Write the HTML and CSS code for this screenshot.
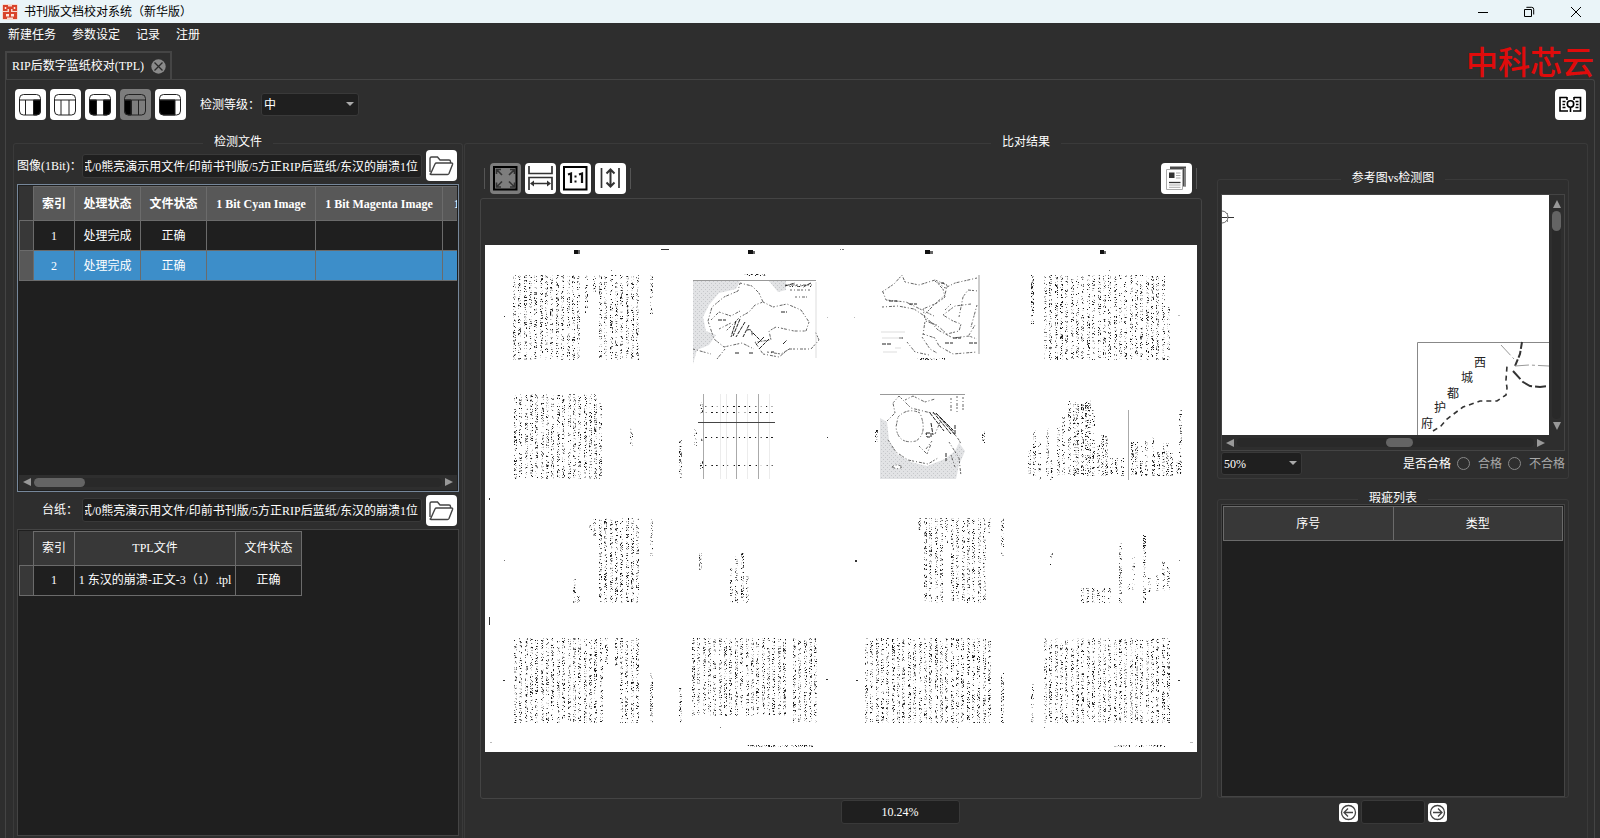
FILE: index.html
```html
<!DOCTYPE html>
<html lang="zh-CN">
<head>
<meta charset="utf-8">
<title>书刊版文档校对系统（新华版）</title>
<link rel="stylesheet" href="styles.css">
</head>
<body>
<header class="titlebar">
  <svg class="app-icon" viewBox="0 0 16 16" aria-hidden="true">
    <rect width="16" height="16" rx="2" fill="#f6d9cf"/>
    <path d="M1 1h5v1.500h4V1h5v6h-4.500V5H9v3h6v7h-4v-1.500H5V15H1V8h6V5H5.500v2H1z" fill="#d8432a"/>
    <path d="M3.500 3v2M12.500 3v2" stroke="#fbe9e0" stroke-width="1.500"/>
    <path d="M4 10h3v2.500H4zM9 10h3v2.500H9z" fill="#fbe9e0"/>
  </svg>
  <h1 class="app-title">书刊版文档校对系统（新华版）</h1>
  <div class="window-buttons">
    <button type="button" aria-label="最小化"><svg viewBox="0 0 12 12"><path d="M1 6.500h10"/></svg></button>
    <button type="button" aria-label="还原"><svg viewBox="0 0 12 12"><path d="M3.500 1.500V1.300h5.200a2 2 0 0 1 2 2v5.200M1.500 3.500h7v7h-7z"/></svg></button>
    <button type="button" aria-label="关闭"><svg viewBox="0 0 12 12"><path d="M1 1l10 10M11 1L1 11"/></svg></button>
  </div>
</header>

<nav class="menubar">
  <button type="button">新建任务</button>
  <button type="button">参数设定</button>
  <button type="button">记录</button>
  <button type="button">注册</button>
</nav>

<div class="tabstrip">
  <div class="tab">
    <span>RIP后数字蓝纸校对(TPL)</span>
    <button type="button" class="tab-close" aria-label="关闭标签"><svg viewBox="0 0 15 15"><circle cx="7.500" cy="7.500" r="7.200" fill="#8a8a8a"/><path d="M3.500 3.500l8 8M11.500 3.500l-8 8" stroke="#2b2b2b" stroke-width="1.300"/></svg></button>
  </div>
  <div class="brand">中科芯云</div>
</div>

<main class="pane">
  <div class="toolbar">
    <button type="button" class="tool" aria-label="右栏布局"><svg viewBox="0 0 31 31"><path d="M18.500 11h7v11a4 4 0 0 1-4 4h-3z" fill="#000"/><rect x="4.500" y="5.500" width="21" height="20.500" rx="4"/><path d="M4.500 11h21M10.500 11v15M18.500 11v15"/></svg></button>
    <button type="button" class="tool" aria-label="三栏布局"><svg viewBox="0 0 31 31"><rect x="4.500" y="5.500" width="21" height="20.500" rx="4"/><path d="M4.500 11h21M11 11v15M19 11v15"/></svg></button>
    <button type="button" class="tool" aria-label="两侧布局"><svg viewBox="0 0 31 31"><path d="M18.500 11h7v11a4 4 0 0 1-4 4h-3zM11.500 11h-7v11a4 4 0 0 0 4 4h3z" fill="#000"/><rect x="4.500" y="5.500" width="21" height="20.500" rx="4"/><path d="M4.500 11h21"/></svg></button>
    <button type="button" class="tool active" aria-label="左栏布局"><svg viewBox="0 0 31 31"><path d="M11 11H4.500v11a4 4 0 0 0 4 4H11z" fill="#000"/><rect x="4.500" y="5.500" width="21" height="20.500" rx="4"/><path d="M4.500 11h21M11.500 11v15M18.500 11v15"/></svg></button>
    <button type="button" class="tool" aria-label="宽左栏布局"><svg viewBox="0 0 31 31"><path d="M20 11H4.500v11a4 4 0 0 0 4 4H20z" fill="#000"/><rect x="4.500" y="5.500" width="21" height="20.500" rx="4"/><path d="M4.500 11h21"/></svg></button>
    <label class="level-label" for="level">检测等级：</label>
    <span class="combo combo-level"><select id="level"><option>中</option></select></span>
    <button type="button" class="tool push-right" aria-label="对照检查"><svg viewBox="0 0 31 31"><g stroke="#000" stroke-width="1.600"><path d="M12 8.500H5v13.500h8M19 8.500h6.500v13.500H18M12 8v3M19 8v3"/><circle cx="15.500" cy="15" r="3.200"/><path d="M15.500 18.500V23"/></g><path d="M7.500 12.500h3M7.500 15.500h2.500M7.500 18.500h3M20.500 12.500h3M21 15.500h2.500M20.500 18.500h3" stroke="#000" stroke-width="1.400"/></svg></button>
  </div>

  <div class="columns">
    <fieldset class="group group-open files">
      <legend>检测文件</legend>
      <div class="files-body">
        <div class="path-row">
          <label for="image-path">图像(1Bit)：</label>
          <input id="image-path" class="field path" type="text" value="试/0熊亮演示用文件/印前书刊版/5方正RIP后蓝纸/东汉的崩溃1位">
          <button type="button" class="tool" aria-label="打开图像文件夹"><svg viewBox="0 0 31 31"><path d="M4 22V8.500q0-1.500 1.500-1.500h6l2.500 3h9q1.500 0 1.500 1.500v1.500M4.500 24l4.500-10q.5-1 1.500-1h15q1.500 0 1 1.500l-3.500 9q-.5 1-1.500 1H5q-1 0-1-1" stroke="#444" stroke-width="1.400"/></svg></button>
        </div>
        <div class="table-box focused">
          <div class="table-clip">
            <table class="grid grid-images">
              <colgroup><col class="c-mark"><col class="c-index"><col class="c-state"><col class="c-state"><col class="c-cyan"><col class="c-magenta"><col class="c-yellow"></colgroup>
              <thead><tr><td class="corner"></td><th>索引</th><th>处理状态</th><th>文件状态</th><th>1 Bit Cyan Image</th><th>1 Bit Magenta Image</th><th>1 Bit Yellow Image</th></tr></thead>
              <tbody>
                <tr><td class="mark"></td><td>1</td><td>处理完成</td><td>正确</td><td></td><td></td><td></td></tr>
                <tr class="selected"><td class="mark"></td><td>2</td><td>处理完成</td><td>正确</td><td></td><td></td><td></td></tr>
              </tbody>
            </table>
          </div>
          <div class="scroll-h">
            <button type="button" class="arrow left" aria-label="向左滚动"></button>
            <div class="track"><div class="thumb thumb-table"></div></div>
            <button type="button" class="arrow right" aria-label="向右滚动"></button>
          </div>
        </div>
        <div class="path-row">
          <label for="tpl-path">台纸：</label>
          <input id="tpl-path" class="field path" type="text" value="试/0熊亮演示用文件/印前书刊版/5方正RIP后蓝纸/东汉的崩溃1位">
          <button type="button" class="tool" aria-label="打开台纸文件夹"><svg viewBox="0 0 31 31"><path d="M4 22V8.500q0-1.500 1.500-1.500h6l2.500 3h9q1.500 0 1.500 1.500v1.500M4.500 24l4.500-10q.5-1 1.500-1h15q1.500 0 1 1.500l-3.500 9q-.5 1-1.500 1H5q-1 0-1-1" stroke="#444" stroke-width="1.400"/></svg></button>
        </div>
        <div class="table-box">
          <div class="table-clip">
            <table class="grid grid-tpl">
              <colgroup><col class="c-mark"><col class="c-index"><col class="c-file"><col class="c-state"></colgroup>
              <thead><tr><td class="corner"></td><th>索引</th><th>TPL文件</th><th>文件状态</th></tr></thead>
              <tbody><tr><td class="mark"></td><td>1</td><td>1 东汉的崩溃-正文-3（1）.tpl</td><td>正确</td></tr></tbody>
            </table>
          </div>
        </div>
      </div>
    </fieldset>

    <fieldset class="group group-open result">
      <legend>比对结果</legend>
      <div class="result-body">
        <section class="viewer">
          <div class="view-tools">
            <i class="sep"></i>
            <button type="button" class="tool active" aria-label="适合窗口"><svg viewBox="0 0 31 31"><rect x="4" y="4" width="22.500" height="22.500" stroke="#000" stroke-width="2"/><path d="M12 12L6.500 6.500M6.500 11V6.500H11M19 12l5.500-5.500M20 6.500h4.500V11M12 18.500L6.500 24M6.500 19.500V24H11M19 18.500l5.500 5.500M20 24h4.500v-4.500" stroke="#333" stroke-width="1.600"/></svg></button>
            <button type="button" class="tool" aria-label="适合宽度"><svg viewBox="0 0 31 31"><path d="M4 3v7.500h23V3M4 27V14.500h23V27" stroke="#333" stroke-width="1.700"/><path d="M7 20.500h17" stroke="#333" stroke-width="1.500"/><path d="M5 20.500l4-3v6zM26 20.500l-4-3v6z" fill="#333" stroke="none"/></svg></button>
            <button type="button" class="tool" aria-label="实际大小"><svg viewBox="0 0 31 31"><rect x="4" y="4" width="22.500" height="22.500" stroke="#000" stroke-width="2"/><path d="M8 11.500l3-1V20M19 11.500l3-1V20" stroke="#111" stroke-width="2.200"/><path d="M14.500 12.500h2v2h-2zM14.500 17.500h2v2h-2z" fill="#111" stroke="none"/></svg></button>
            <button type="button" class="tool" aria-label="适合高度"><svg viewBox="0 0 31 31"><path d="M6.500 5v20M24 5v20" stroke="#333" stroke-width="1.700"/><path d="M15.500 8v14M11.500 10.500l4-4 4 4M11.500 19.500l4 4 4-4" stroke="#333" stroke-width="2"/></svg></button>
            <i class="sep"></i>
            <button type="button" class="tool push-right" aria-label="报告"><svg viewBox="0 0 31 31"><path d="M9 3.500h16v20H9z" fill="#4a4a4a" stroke="none"/><path d="M24 5v18" stroke="#999" stroke-width="1.500"/><path d="M5.500 6.500h16v20h-16z" fill="#fff" stroke="#aaa"/><path d="M8 9.500h5.500V15H8z" fill="#333" stroke="none"/><path d="M8 19.500h11.500" stroke="#333" stroke-width="1.300"/><path d="M15 10h4.500M15 12.500h4.500M15 15h4.500M8 22h11.500M8 24.300h11.500" stroke="#aaa" stroke-width="1"/></svg></button>
            <i class="sep"></i>
          </div>
          <div class="canvas">
            <svg class="sheet" viewBox="0 0 712 507" role="img" aria-label="拼版预览">
              <defs>
                <pattern id="tone" width="4" height="4" patternUnits="userSpaceOnUse"><rect width="4" height="4" fill="#e2e3e5"/><path d="M0 0h1v1H0zM2 2h1v1H2z" fill="#c6c8cb"/></pattern>
              </defs>
              <rect width="712" height="507" fill="#fff"/>
              <g shape-rendering="crispEdges">
                <path d="M89 5h4v4h-4zM263 5h5v4h-5zM440 5h5v4h-5zM615 5h4v4h-4z" fill="#111"/>
                <path d="M93 5h2v4h-2zM268 6h2v3h-2zM445 6h3v3h-3zM619 6h2v3h-2z" fill="#666"/>
                <path d="M176 4h8v1h-8zM4 372h1v8H4zM4 253h1v2H4zM19 71h1v1h-1zM342 192h1v1h-1zM341 434h2v1h-2zM18 435h2v1h-2zM370 315h2v2h-2zM371 435h2v1h-2zM693 435h2v1h-2z" fill="#333"/>
                <path d="M357 4h2v1h-2zM355 4h1v1h-1zM694 315h1v1h-1zM19 315h1v1h-1zM235 482h1v1h-1zM472 482h1v1h-1zM559 482h1v1h-1zM126 25h1v1h-1zM624 25h1v1h-1z" fill="#777"/>
                <path d="M5 497h2v1H5zM705 497h3v1h-3zM342 72h1v1h-1zM369 72h1v1h-1zM693 70h2v1h-2z" fill="#bbb"/>
              </g>
              <g fill="url(#tone)">
                <path d="M208 36h47l-4 8-17 4-10 12-6 12 3 14 10 4-7 10-12 5-4 14zM284 36h17v9l-8 2z"/>
                <path d="M395 173l7 4 2 18 8 14 14 8 16 4 18-7 10-8 4-8 6 8-6 14-3 14h-76z"/>
              </g>
              <g class="map">
                <path d="M208 35.500h123" class="edge"/>
                <path d="M331 37v76" class="faint"/>
                <path d="M255 38l12 3 7 7 4 9-8 3-6 7-9 5-8 8-6 6M255 38l-2 8-14 6-12 10-4 14 6 18 10 8 18-4 12 6M278 57l10 5 14-3 14 6 8 12-3 9-12 0-18-4-7 4 2 9-16 2 8 12 16 3 10-8 22 0 8-9-4-9"/>
                <path d="M251 76l-5 16M255 74l-7 17M260 77l-9 15M264 80l-6 12M262 85q6-2 5 6M268 88l8 8M279 92l-8 8M284 94l-10 10" class="dark"/>
                <path d="M226 75l8-8 12 4 9-5M234 84l12-6M240 104l-8 10M208 104l18 5M282 107l14 2 10-6M300 40h28M305 45h20M310 52h12"/>
                <path d="M300 41l10-3M318 42l8-4M296 67h6M233 75h8M250 108h4M264 108h5M286 107h3M298 99l4-4" class="dark"/>
                <path d="M494 30v79" class="edge"/>
                <path d="M397 47l12-8 8-9 3 7 14 3 16-5 12 5-2 10-10 9-10 10M398 47l3 8 20 2 14 7 14 7M450 36l8 8 2 8-8 6-14 6 2 10 14 8 8 7 12-3 2-7-8-3-10-6 12-9 16-2M492 33l-22 5-10 5-8-6M474 72l4-20 5-7 10 1M397 62l16-1 16 3 12 8 12 13 15 8 16-2 8 3M438 89l12 4 4 8 14 8 24-2M437 92l8 12 7 4M438 90l2-14 12 4M422 97l8 10 14 3M460 65l6-6M492 60l-6 22M484 90l6-10"/>
                <path d="M456 38h3M404 56h8M424 59h8M460 98h8M468 93h8M484 98h8M397 99h9M414 93h5" class="dark"/>
                <path d="M396 87h24M397 93h20M410 103h6M398 107h14" class="faint"/>
                <path d="M395 149.500h85" class="edge"/>
                <path d="M402 176l8-8-2-10 6-7 12 12 16 4 10 2 10 10 12 16 2 4M420 155l8-4 12 6 10-3M413 172q10-10 22-4 8 20-4 28-18 4-20-14zM403 195l8 12 12 8 20 4 10-6M434 201l8 8 4-10M447 196l-6 8M464 197l10 16 2 18M450 189l6-14M470 222l-4-12"/>
                <path d="M445 168l14 18M448 167l18 22M451 168l20 23M455 172l14 14M441 188h5v4h-4zM446 178l2 12M470 180v10M461 208v8" class="dark"/>
                <path d="M466 153v14M472 151v17M478 152v14"/>
                <path d="M407 222q5-4 10 0-4 3-10 0z" fill="#fff"/>
              </g>
              <g shape-rendering="crispEdges">
                <path d="M218.500 149v85M273.500 149v85M251.500 149v85" stroke="#aaa"/>
                <path d="M241.500 149v85M235.500 149v85M262.500 149v85M284.500 149v85" stroke="#ececec"/>
                <path d="M643.500 165v70" stroke="#aaa"/>
                <path d="M213 177.500h77" stroke="#444"/>
              </g>
              <g id="ink" shape-rendering="crispEdges"></g>
            </svg>
          </div>
          <div class="zoom-row"><input class="field zoom-value" type="text" value="10.24%" aria-label="缩放比例"></div>
        </section>

        <aside class="side">
          <fieldset class="group">
            <legend>参考图vs检测图</legend>
            <div class="compare-body">
              <div class="compare-view">
                <svg class="detail" viewBox="0 0 327 240" preserveAspectRatio="xMaxYMax slice" role="img" aria-label="参考图局部">
                  <rect width="327" height="240" fill="#fff"/>
                  <g fill="none" stroke="#333">
                    <path d="M0 16a6 6 0 0 1 0 12" stroke="#666"/>
                    <path d="M0 22.500h12"/><path d="M5.500 18v9" stroke="#888"/>
                    <path d="M195.500 240v-92.500H327" stroke="#888"/>
                    <path d="M211 236l8-5 6-7 16-12 17-6h17l9-6 1-7-1-8 1-14" stroke-width="1.600" stroke-dasharray="5 4"/>
                    <path d="M300 147l-2 12-5 12" stroke-width="2" stroke-dasharray="7 2"/>
                    <path d="M291 176l10 11 7 4 10 1 9-1" stroke-width="2" stroke-dasharray="11 3"/>
                    <path d="M279 150l13 14M293 171l14-1 20 1" stroke="#999" stroke-dasharray="14 3 3 3"/>
                  </g>
                  <g class="map-label"><text x="258" y="172">西</text><text x="245" y="187">城</text><text x="231" y="203">都</text><text x="218" y="217">护</text><text x="205" y="233">府</text></g>
                </svg>
                <div class="scroll-v">
                  <button type="button" class="arrow up" aria-label="向上滚动"></button>
                  <div class="track"><div class="thumb thumb-v"></div></div>
                  <button type="button" class="arrow down" aria-label="向下滚动"></button>
                </div>
                <div class="scroll-h">
                  <button type="button" class="arrow left" aria-label="向左滚动"></button>
                  <div class="track"><div class="thumb thumb-detail"></div></div>
                  <button type="button" class="arrow right" aria-label="向右滚动"></button>
                </div>
              </div>
              <div class="verdict">
                <span class="combo combo-zoom"><select aria-label="局部缩放"><option>50%</option></select></span>
                <span class="verdict-title">是否合格</span>
                <label class="choice"><input type="radio" name="verdict">合格</label>
                <label class="choice"><input type="radio" name="verdict">不合格</label>
              </div>
            </div>
          </fieldset>
          <fieldset class="group defects">
            <legend>瑕疵列表</legend>
            <div class="defect-body">
              <table class="grid grid-defects"><thead><tr><th>序号</th><th>类型</th></tr></thead></table>
            </div>
          </fieldset>
          <div class="pager">
            <button type="button" aria-label="上一个"><svg viewBox="0 0 19 19"><circle cx="9.500" cy="9.500" r="7"/><path d="M14 9.500H5.500M9 5.500l-4 4 4 4"/></svg></button>
            <input class="field" type="text" aria-label="瑕疵序号">
            <button type="button" aria-label="下一个"><svg viewBox="0 0 19 19"><circle cx="9.500" cy="9.500" r="7"/><path d="M5 9.500h8.500M10 5.500l4 4-4 4"/></svg></button>
          </div>
        </aside>
      </div>
    </fieldset>
  </div>
</main>
<script src="preview.js"></script>
</body>
</html>
```

FILE: styles.css
```css
* { box-sizing: border-box; }

body {
  margin: 0;
  height: 100vh;
  display: flex;
  flex-direction: column;
  overflow: hidden;
  background: #2e2e2e;
  color: #fff;
  font: 12px/16px "Liberation Serif", "Noto Sans CJK SC", serif;
}

button, input, select { font: inherit; color: inherit; }
button { padding: 0; border: 0; background: none; }
svg { display: block; }

.titlebar {
  display: flex;
  align-items: center;
  flex: none;
  height: 23px;
  padding-left: 2px;
  background: #eaf4f8;
  color: #000;
}
.app-icon { width: 16px; height: 16px; }
.app-title { margin: 0 0 0 6px; font-size: 12px; font-weight: 400; }
.window-buttons { display: flex; margin-left: auto; height: 20px; }
.window-buttons button { width: 46px; display: flex; align-items: center; justify-content: center; }
.window-buttons button:last-child { width: 48px; }
.window-buttons svg { width: 12px; height: 12px; fill: none; stroke: #000; }

.menubar { display: flex; flex: none; gap: 16px; height: 23px; padding-left: 8px; }

.tabstrip { display: flex; flex: none; height: 33px; padding: 0 6px 0 5px; justify-content: space-between; }
.tab {
  display: flex;
  align-items: center;
  align-self: flex-end;
  gap: 7px;
  height: 28px;
  padding: 0 4px 0 5px;
  border: 2px solid #454545;
  border-bottom: 0;
}
.tab-close { width: 15px; height: 15px; }
.brand { color: #e00b0b; font: 500 32px/28px "Noto Sans CJK SC", sans-serif; }

.pane {
  flex: 1;
  min-height: 0;
  display: flex;
  flex-direction: column;
  margin: 0 5px;
  padding: 9px 6px 0 7px;
  border: 1px solid #444;
  border-bottom: 0;
  border-radius: 0 3px 0 0;
}
.toolbar { display: flex; flex: none; align-items: center; gap: 4px; padding: 0 2px; }
.tool { flex: none; width: 31px; height: 31px; border-radius: 4px; background: #fff; }
.tool.active { background: #7d7d7d; }
.tool svg { width: 31px; height: 31px; fill: none; stroke: #222; stroke-width: 1; }
.push-right { margin-left: auto; }
.level-label { width: 57px; margin-left: 10px; white-space: nowrap; }

.combo { position: relative; display: block; height: 23px; }
.combo::after {
  content: "";
  position: absolute;
  right: 5px;
  top: 9px;
  border: 4px solid transparent;
  border-top-color: #aaa;
  border-bottom: 0;
  pointer-events: none;
}
.combo select {
  appearance: none;
  width: 100%;
  height: 100%;
  padding: 0 16px 0 2px;
  border: 1px solid #393939;
  border-radius: 3px;
  background: #1f1f1f;
}
.combo-level { width: 98px; }
.combo-zoom { width: 81px; margin-right: auto; }

.field {
  height: 24px;
  min-width: 0;
  padding: 0 3px 0 2px;
  border: 1px solid #393939;
  border-radius: 3px;
  background: #1f1f1f;
}

.columns { flex: 1; min-height: 0; display: flex; gap: 1px; padding-top: 16px; }
.group { display: flex; flex-direction: column; min-width: 0; margin: 0; padding: 0; border: 1px solid #3a3a3a; border-radius: 3px; }
.group legend { margin: 0 auto; padding: 0 11px 2px; line-height: 12px; }
.group-open { border-bottom: 0; border-radius: 3px 3px 0 0; }

.files { width: 450px; flex: none; }
.files-body { flex: 1; min-height: 0; display: flex; flex-direction: column; gap: 3px; padding: 0 3px 2px; }
.path-row { display: flex; flex: none; align-items: center; gap: 4px; padding-right: 2px; }
.path-row label { width: 61px; text-align: right; white-space: nowrap; }
.path { flex: 1; }

.table-box { flex: 1; min-height: 0; display: flex; flex-direction: column; padding: 1px; border: 1px solid #444; background: #1f1f1f; }
.table-box.focused { border-color: #76879a; }
.table-clip { flex: 1; min-height: 0; overflow: hidden; }

.grid { border-collapse: collapse; table-layout: fixed; text-align: center; }
.grid th, .grid td { height: 30px; padding: 0; border: 1px solid #6b6b6b; white-space: nowrap; overflow: hidden; }
.grid thead th, .grid thead td { height: 34px; }
.grid th { background: #383838; font-weight: 400; }
.grid-images th { background: #585858; font-weight: 700; }
.grid .corner { background: #333; border-left-color: #333; border-top-color: #333; }
.grid .mark { background: #383838; }
.grid .selected td { background: #3d8ec9; }
.grid .selected .mark { background: #585858; }
.grid-images { width: 542px; }
.grid-tpl { width: 283px; }
.grid-defects { width: 100%; }
.c-mark { width: 14px; }
.c-index { width: 41px; }
.c-state { width: 66px; }
.c-cyan { width: 109px; }
.c-magenta { width: 127px; }
.c-yellow { width: 119px; }
.c-file { width: 161px; }

.scroll-h, .scroll-v { display: flex; flex: none; align-items: center; background: #2e2e2e; }
.scroll-h { height: 15px; padding: 0 4px; gap: 3px; }
.scroll-v { width: 15px; flex-direction: column; padding: 5px 0; gap: 3px; }
.track { flex: 1; border-radius: 5px; background: #292929; }
.scroll-h .track { height: 9px; }
.scroll-v .track { width: 9px; }
.thumb { border-radius: 5px; background: #646464; }
.scroll-h .thumb { height: 9px; }
.scroll-v .thumb { width: 9px; }
.thumb-table { width: 51px; }
.thumb-detail { width: 27px; margin-left: 50%; }
.thumb-v { height: 20px; }
.arrow { width: 0; height: 0; border: 4px solid transparent; }
.arrow.left { border-left: 0; border-right: 8px solid #999; }
.arrow.right { border-right: 0; border-left: 8px solid #999; }
.arrow.up { border-top: 0; border-bottom: 8px solid #999; }
.arrow.down { border-bottom: 0; border-top: 8px solid #999; }

.result { flex: 1; }
.result-body { flex: 1; min-height: 0; display: flex; gap: 15px; padding: 0 18px 0 15px; }
.viewer { flex: 1; min-width: 0; display: flex; flex-direction: column; padding: 13px 0 14px; }
.view-tools { display: flex; flex: none; align-items: center; gap: 4px; padding: 0 4px 4px; }
.sep { width: 1px; height: 21px; background: #555; }
.view-tools .sep { margin: 0 1px 0 0; }
.canvas { flex: 1; min-height: 0; display: flex; align-items: center; padding: 0 4px; border: 1px solid #444; border-radius: 3px; }
.sheet { width: 100%; max-height: 100%; }
.map { fill: none; stroke: #666; stroke-width: 1; stroke-dasharray: 2 2 1 2 3 1; }
.map .edge { stroke: #999; stroke-dasharray: none; }
.map .faint { stroke: #ddd; stroke-dasharray: none; }
.map .dark { stroke: #222; stroke-dasharray: 4 1; }
.zoom-row { display: grid; grid-template-columns: 1fr 1fr; flex: none; padding-top: 1px; }
.zoom-value { grid-column: 2; width: 119px; text-align: center; }

.side { flex: none; width: 352px; display: flex; flex-direction: column; padding: 22px 0 14px; }
.compare-body { padding: 8px 3px 3px; }
.compare-view { display: grid; grid-template-columns: 1fr 15px; border: 1px solid #444; }
.detail { width: 100%; height: 240px; }
.map-label { font: 12px "Noto Sans CJK SC", sans-serif; fill: #222; text-anchor: middle; }
.verdict { display: flex; align-items: center; padding-top: 1px; }
.choice { display: flex; align-items: center; gap: 8px; margin-left: 6px; color: #a8a8a8; }
.choice input { appearance: none; width: 13px; height: 13px; margin: 0; border: 1px solid #888; border-radius: 50%; }
.defects { flex: 1; min-height: 0; margin-top: 13px; }
.defect-body { flex: 1; margin: -2px 3px 0; padding: 1px; border: 1px solid #444; background: #1f1f1f; }
.pager { display: flex; flex: none; align-items: center; justify-content: center; gap: 3px; padding-top: 2px; }
.pager button { width: 19px; height: 19px; border-radius: 3px; background: #fff; }
.pager .field { width: 64px; }
.pager svg { fill: none; stroke: #444; stroke-width: 1.300; }
```

FILE: preview.js
```javascript
// Text columns of the imposed sheet: [x, top, bottom, count].
const PITCH = 5.35;
const columns = [
  [28, 30, 115, 13], [100, 30, 68, 1], [108, 30, 47, 1], [114, 30, 115, 8], [165, 30, 69, 1],
  [546, 30, 79, 1], [559, 30, 115, 23], [682, 62, 115, 1],
  [29, 149, 234, 16], [114, 157, 234, 1], [145, 183, 201, 1], [194, 195, 234, 1],
  [215, 157, 169, 1], [209, 184, 201, 1], [215, 187, 196, 1], [215, 215, 224, 1],
  [390, 185, 198, 1], [497, 185, 198, 1],
  [543, 202, 231, 1], [548, 185, 231, 1], [553, 197, 235, 1], [561, 183, 231, 1], [565, 213, 235, 1],
  [572, 180, 231, 1], [577, 172, 231, 1], [583, 156, 231, 1], [588, 157, 231, 1], [591, 159, 231, 1],
  [596, 156, 231, 1], [600, 156, 231, 1], [603, 155, 231, 1], [607, 164, 231, 1], [612, 200, 231, 1],
  [616, 188, 231, 1], [620, 190, 231, 1], [625, 213, 231, 3], [646, 196, 231, 1], [650, 197, 231, 1],
  [655, 201, 231, 1], [660, 195, 231, 1], [667, 191, 231, 1], [672, 207, 231, 1], [677, 197, 231, 1],
  [681, 197, 231, 1], [685, 208, 231, 1], [691, 214, 231, 1], [694, 165, 231, 1],
  [88, 332, 358, 1], [92, 350, 358, 1], [104, 280, 287, 1], [108, 274, 295, 1], [114, 273, 358, 8],
  [165, 273, 312, 1], [214, 308, 325, 1], [245, 322, 358, 1], [250, 311, 358, 1], [256, 308, 358, 1],
  [261, 326, 358, 1], [433, 273, 288, 1], [439, 273, 358, 4], [460, 273, 298, 1], [466, 273, 358, 7],
  [503, 273, 288, 1], [516, 273, 312, 1], [565, 308, 313, 1], [565, 319, 322, 1],
  [596, 343, 358, 6], [634, 297, 358, 1], [642, 337, 346, 1], [647, 310, 346, 1], [658, 290, 358, 1],
  [663, 330, 347, 1], [671, 330, 346, 1], [677, 315, 346, 1], [682, 322, 346, 1],
  [29, 393, 478, 17], [120, 393, 421, 1], [130, 393, 421, 1], [135, 393, 478, 4], [165, 428, 478, 1],
  [194, 439, 478, 1], [207, 393, 471, 18], [308, 393, 478, 5],
  [380, 393, 478, 24], [516, 428, 478, 1], [546, 439, 478, 1], [559, 393, 478, 24]
];
// Horizontal runs: [x, y, width].
const runs = [[260, 500, 68], [628, 500, 52], [259, 29, 22], [430, 113, 30], [302, 40, 24]];

let seed = 7;
function random() {
  seed = (seed * 1664525 + 1013904223) % 4294967296;
  return seed / 4294967296;
}

const inks = { "#1c1c1c": "", "#666": "", "#b4b4b4": "", "#e2e2e2": "" };
const names = Object.keys(inks);
function dot(x, y, weight) {
  const r = random() * weight;
  const ink = r > 0.74 ? names[0] : r > 0.52 ? names[1] : r > 0.28 ? names[2] : names[3];
  inks[ink] += `M${x} ${y}h1v1h-1z`;
}

for (const [x, top, bottom, count] of columns) {
  for (let i = 0; i < count; i++) {
    const left = Math.round(x + i * PITCH);
    const weight = 0.8 + random() * 0.25;
    for (let y = top; y < bottom; y++) {
      if (random() < 0.25) continue;
      for (let dx = 0; dx < 3; dx++) {
        if (random() < 0.46) dot(left + dx, y, weight);
      }
    }
  }
}
for (const [x, y, width] of runs) {
  for (let dx = 0; dx < width; dx++) {
    for (let dy = 0; dy < 2; dy++) if (random() < 0.45) dot(x + dx, y + dy, 1);
  }
}
for (const y of [161, 167, 192, 220]) {
  for (let i = 0; i < 13; i++) {
    dot(Math.round(220 + i * 5.5), y, 1.4);
    dot(Math.round(221 + i * 5.5), y, 1.4);
  }
}

const layer = document.getElementById("ink");
for (const name of names) {
  const path = document.createElementNS("http://www.w3.org/2000/svg", "path");
  path.setAttribute("d", inks[name]);
  path.setAttribute("fill", name);
  layer.append(path);
}

// Long paths show their tail.
for (const input of document.querySelectorAll(".path")) {
  input.scrollLeft = input.scrollWidth;
}
```
